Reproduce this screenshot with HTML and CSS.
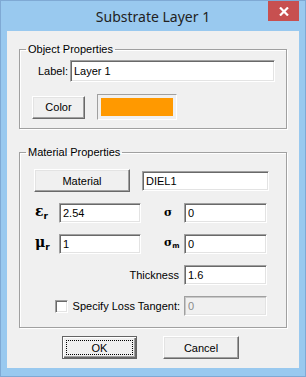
FILE: index.html
```html
<!DOCTYPE html>
<html lang="en">
<head>
  <meta charset="UTF-8" />
  <title>Substrate Layer 1</title>
  <link rel="stylesheet" href="styles.css">
</head>
<body>
  <div class="window">
    <div class="titlebar">
      <span></span>
      <span class="title">Substrate Layer 1</span>
      <span class="close">
        <svg width="10" height="9" viewBox="0 0 10 9">
          <path d="M1 0.5 L9 8.5 M9 0.5 L1 8.5" stroke="#fff" stroke-width="2.2" fill="none"/>
        </svg>
      </span>
    </div>

    <div class="client">
      <fieldset class="group group-object">
        <legend>Object Properties</legend>
        <div class="row label-row">
          <label for="label" class="label-text">Label:</label>
          <input type="text" id="label" class="field field-label" value="Layer 1" />
        </div>
        <div class="row color-row">
          <button class="btn btn-color">Color</button>
          <span class="swatch"><span class="swatch-fill"></span></span>
        </div>
      </fieldset>

      <fieldset class="group group-material">
        <legend>Material Properties</legend>
        <div class="row material-row">
          <button class="btn btn-material">Material</button>
          <input type="text" class="field field-diel" value="DIEL1" />
        </div>
        <div class="params">
          <span class="sym">&epsilon;<sub>r</sub></span>
          <input type="text" class="field" value="2.54" />
          <span class="sym sym-sigma">&sigma;</span>
          <input type="text" class="field" value="0" />

          <span class="sym">&mu;<sub>r</sub></span>
          <input type="text" class="field" value="1" />
          <span class="sym sym-sigma">&sigma;<sub>m</sub></span>
          <input type="text" class="field" value="0" />

          <label class="wide">Thickness</label>
          <input type="text" class="field" value="1.6" />

          <label class="wide loss"><input type="checkbox" class="check" />Specify Loss Tangent:</label>
          <input type="text" class="field" value="0" disabled />
        </div>
      </fieldset>

      <div class="actions">
        <button class="btn btn-default">OK</button>
        <button class="btn">Cancel</button>
      </div>
    </div>
  </div>
</body>
</html>
```

FILE: styles.css
```css
body {
  margin: 0;
  font-family: 'Liberation Sans', Arial, sans-serif;
  font-size: 11px;
  color: #000;
}
.window {
  width: 306px;
  height: 377px;
  box-sizing: border-box;
  background: #99c9ef;
  border: 1px solid #7fa9d4;
  padding: 0 6px 8px;
  display: flex;
  flex-direction: column;
}
.titlebar {
  height: 30px;
  display: grid;
  grid-template-columns: 31px 1fr 31px;
  align-items: center;
}
.title {
  text-align: center;
  font-family: 'Noto Sans', sans-serif;
  font-size: 14px;
  color: #222;
}
.close {
  align-self: start;
  height: 20px;
  background: #c75050;
  display: flex;
  align-items: center;
  justify-content: center;
}
.client {
  flex: 1;
  background: #f0f0f0;
  padding-top: 12px;
  display: flex;
  flex-direction: column;
}

/* group boxes */
.group {
  margin: 0 12px;
  padding: 0 6px;
  border: 1px solid #a0a0a0;
  box-shadow: inset 1px 1px #fff, 1px 1px #fff;
}
.group legend {
  padding: 0 2px;
  line-height: 13px;
}
.group-object {
  padding-bottom: 8px;
}
.group-material {
  margin-top: 17px;
  padding-bottom: 11px;
}
.row {
  display: flex;
  align-items: center;
}
.label-row {
  margin-top: 4px;
  padding-left: 12px;
  height: 22px;
}
.label-text {
  width: 32px;
}
.color-row {
  margin-top: 12px;
  padding-left: 6px;
  gap: 12px;
}
.material-row {
  margin-top: 10px;
  padding-left: 8px;
  gap: 12px;
}

/* inputs */
.field {
  box-sizing: border-box;
  height: 20px;
  margin: 0;
  padding: 0 3px;
  font: inherit;
  color: #000;
  background: #fff;
  border: 1px solid;
  border-color: #a0a0a0 #fff #fff #a0a0a0;
  box-shadow: inset 1px 1px #696969, inset -1px -1px #e3e3e3;
  outline: none;
}
.field:disabled {
  background: #f0f0f0;
  color: #8a8a8a;
  box-shadow: inset 1px 1px #c8c8c8, inset -1px -1px #e3e3e3;
}
.field-label {
  width: 205px;
  height: 22px;
}
.field-diel {
  width: 127px;
}

/* buttons */
.btn {
  box-sizing: border-box;
  height: 23px;
  margin: 0;
  padding: 0;
  font: inherit;
  color: #000;
  background: #f0f0f0;
  border: 1px solid;
  border-color: #fff #696969 #696969 #fff;
  box-shadow: inset -1px -1px #a0a0a0, inset 1px 1px #e3e3e3;
}
.btn-color {
  width: 53px;
}
.btn-material {
  width: 96px;
}
.btn-default {
  border-color: #646464;
  box-shadow: inset 1px 1px #fff, inset -1px -1px #696969, inset -2px -2px #a0a0a0;
  outline: 1px dotted #000;
  outline-offset: -5px;
}
.swatch {
  width: 80px;
  height: 26px;
  box-sizing: border-box;
  padding: 3px;
  border: 1px solid;
  border-color: #a0a0a0 #fff #fff #a0a0a0;
  display: flex;
}
.swatch-fill {
  flex: 1;
  background: #ff9900;
}

/* material parameters */
.params {
  margin-top: 11px;
  padding-left: 8px;
  display: grid;
  grid-template-columns: 25px 82px 43px 83px;
  grid-auto-rows: 20px;
  row-gap: 11px;
  align-items: center;
}
.sym {
  font-family: 'DejaVu Serif', serif;
  font-weight: bold;
  font-size: 14px;
  line-height: 20px;
  padding-left: 1px;
}
.sym sub {
  font-family: 'DejaVu Sans', sans-serif;
  font-size: 9px;
  vertical-align: -3px;
}
.sym-sigma {
  font-size: 11px;
  padding-left: 23px;
}
.sym-sigma sub {
  font-size: 7px;
  vertical-align: -2px;
}
.wide {
  grid-column: 1 / 4;
  text-align: right;
  padding-right: 5px;
}
.loss {
  display: flex;
  align-items: center;
  justify-content: flex-end;
  padding-right: 4px;
}
.check {
  appearance: none;
  width: 13px;
  height: 13px;
  margin: 0 5px 0 0;
  background: #fff;
  border: 1px solid;
  border-color: #a0a0a0 #fff #fff #a0a0a0;
  box-shadow: inset 1px 1px #696969, inset -1px -1px #e3e3e3;
}

.actions {
  margin-top: 8px;
  padding-left: 55px;
  display: flex;
  gap: 26px;
}
.actions .btn {
  width: 75px;
}
.actions .btn + .btn {
  width: 76px;
}
```
